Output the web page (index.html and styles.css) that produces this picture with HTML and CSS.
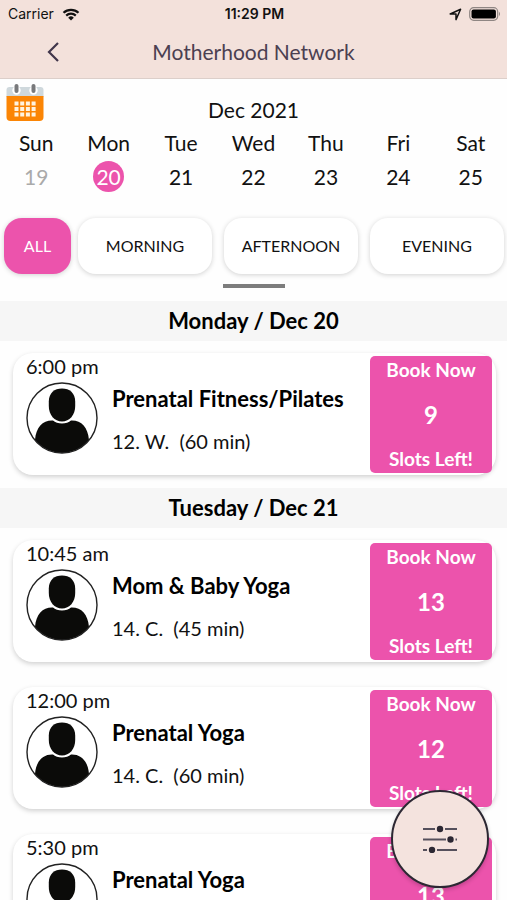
FILE: index.html
```html
<!DOCTYPE html>
<html lang="en">
<head>
<meta charset="utf-8">
<meta name="viewport" content="width=device-width, initial-scale=1">
<title>Motherhood Network</title>
<link rel="stylesheet" href="styles.css">
</head>
<body>
<svg class="defs" aria-hidden="true">
  <symbol id="person" viewBox="0 0 72 72">
    <clipPath id="disc"><circle cx="36" cy="36" r="35"/></clipPath>
    <g clip-path="url(#disc)">
      <path d="M9 58C10 45 17 38 27 38.500C31 42.500 41 42.500 45 38.500C55 38 62 45 63 58V72H9Z" fill="#0b0b09"/>
      <path d="M36 6.500C43.500 6.500 49.200 11 49.200 19.500V24C49.200 33 43.500 39.500 36 39.500S22.800 33 22.800 24V19.500C22.800 11 28.500 6.500 36 6.500Z" fill="#0b0b09"/>
    </g>
    <circle cx="36" cy="36" r="35" fill="none" stroke="#222" stroke-width="1.400"/>
  </symbol>
</svg>
<div class="app">
  <header class="top">
    <div class="status">
      <span class="carrier">Carrier
        <svg class="wifi" viewBox="0 0 18 13" aria-hidden="true"><path d="M1.500 4.800A11 11 0 0 1 16.500 4.800M4.200 7.600A7 7 0 0 1 13.800 7.600" fill="none" stroke="#111" stroke-width="2.200"/><path d="M9 12.500L6.200 9.700A4 4 0 0 1 11.800 9.700Z" fill="#111"/></svg>
      </span>
      <span class="clock">11:29 PM</span>
      <span class="indicators">
        <svg class="arrow" viewBox="0 0 13 13" aria-hidden="true"><path d="M1.200 6L11.600 1.300L7 11.600V6Z" fill="none" stroke="#111" stroke-width="1.500" stroke-linejoin="round"/></svg>
        <svg class="battery" viewBox="0 0 32 14" aria-hidden="true"><rect x="0.700" y="0.700" width="28" height="12.600" rx="4" fill="none" stroke="#8f8683" stroke-width="1.200"/><rect x="2.500" y="2.500" width="24.400" height="9" rx="2" fill="#000"/><path d="M30 4.800Q32 7 30 9.200Z" fill="#8f8683"/></svg>
      </span>
    </div>
    <nav class="navbar">
      <button class="back" aria-label="Back"><svg viewBox="0 0 14 22" aria-hidden="true"><path d="M12 2L3 11L12 20" fill="none" stroke="#41364b" stroke-width="2.200"/></svg></button>
      <h1>Motherhood Network</h1>
    </nav>
  </header>

  <section class="calendar">
    <div class="month">
      <button class="pick" aria-label="Choose date"><svg viewBox="0 0 38 38" aria-hidden="true">
        <path d="M0.500 13V6Q0.500 3 3.500 3H34.500Q37.500 3 37.500 6V13Z" fill="#cfd8dc"/>
        <path d="M0.500 12H37.500V33Q37.500 37 33.500 37H4.500Q0.500 37 0.500 33Z" fill="#fb8505"/>
        <circle cx="10.500" cy="6.500" r="4.200" fill="#fff"/><circle cx="27.500" cy="6.500" r="4.200" fill="#fff"/>
        <rect x="8.500" y="0" width="4" height="9" rx="2" fill="#78797b"/><rect x="25.500" y="0" width="4" height="9" rx="2" fill="#78797b"/>
        <path d="M8.500 17.500h4v4h-4zM14.200 17.500h4v4h-4zM19.900 17.500h4v4h-4zM25.600 17.500h4v4h-4zM8.500 23h4v4h-4zM14.200 23h4v4h-4zM19.900 23h4v4h-4zM25.600 23h4v4h-4zM8.500 28.500h4v4h-4zM14.200 28.500h4v4h-4zM19.900 28.500h4v4h-4zM25.600 28.500h4v4h-4z" fill="#fff3df"/>
      </svg></button>
      <h2>Dec 2021</h2>
    </div>
    <div class="week">
      <span>Sun</span><span>Mon</span><span>Tue</span><span>Wed</span><span>Thu</span><span>Fri</span><span>Sat</span>
      <button class="day past">19</button><button class="day selected">20</button><button class="day">21</button><button class="day">22</button><button class="day">23</button><button class="day">24</button><button class="day">25</button>
    </div>
    <div class="filters">
      <button class="chip active">ALL</button>
      <div class="periods">
        <button class="chip">MORNING</button>
        <button class="chip">AFTERNOON</button>
        <button class="chip">EVENING</button>
      </div>
    </div>
    <div class="handle"></div>
  </section>

  <main class="schedule">
    <h3>Monday / Dec 20</h3>
    <article class="card">
      <div class="who"><time>6:00 pm</time><svg class="avatar" aria-hidden="true"><use href="#person"/></svg></div>
      <div class="info"><h4>Prenatal Fitness/Pilates</h4><p>12. W.&nbsp; (60 min)</p></div>
      <button class="book"><span>Book Now</span><strong>9</strong><span>Slots Left!</span></button>
    </article>
    <h3>Tuesday / Dec 21</h3>
    <article class="card">
      <div class="who"><time>10:45 am</time><svg class="avatar" aria-hidden="true"><use href="#person"/></svg></div>
      <div class="info"><h4>Mom &amp; Baby Yoga</h4><p>14. C.&nbsp; (45 min)</p></div>
      <button class="book"><span>Book Now</span><strong>13</strong><span>Slots Left!</span></button>
    </article>
    <article class="card">
      <div class="who"><time>12:00 pm</time><svg class="avatar" aria-hidden="true"><use href="#person"/></svg></div>
      <div class="info"><h4>Prenatal Yoga</h4><p>14. C.&nbsp; (60 min)</p></div>
      <button class="book"><span>Book Now</span><strong>12</strong><span>Slots Left!</span></button>
    </article>
    <article class="card">
      <div class="who"><time>5:30 pm</time><svg class="avatar" aria-hidden="true"><use href="#person"/></svg></div>
      <div class="info"><h4>Prenatal Yoga</h4></div>
      <button class="book"><span>Book Now</span><strong>13</strong></button>
    </article>
  </main>

  <button class="fab" aria-label="Filters"><svg viewBox="0 0 36 28" aria-hidden="true">
    <path d="M1 4H13M23 4H35M1 14.500H24M33.500 14.500H35M1 25H5M15 25H35" stroke="#55505c" stroke-width="2"/>
    <circle cx="18" cy="4" r="3.200" fill="#2c2833"/><circle cx="28.500" cy="14.500" r="3.200" fill="#2c2833"/><circle cx="10" cy="25" r="3.200" fill="#2c2833"/>
  </svg></button>
</div>
</body>
</html>
```
FILE: styles.css
```css
* { box-sizing: border-box; }
body { margin: 0; background: #fefefe; color: #111; font-family: Lato, "Liberation Sans", sans-serif; font-size: 20px; line-height: 24px; }
h1, h2, h3, h4, p { margin: 0; font-size: inherit; font-weight: 400; }
button { margin: 0; padding: 0; border: 0; background: none; color: inherit; font: inherit; }
svg { display: block; }
.defs { position: absolute; width: 0; height: 0; }
.app { display: flex; flex-direction: column; height: 100vh; }

.top { background: #f3e1db; border-bottom: 1px solid #dccfca; }
.status { display: grid; grid-template-columns: 1fr auto 1fr; align-items: center; height: 28px; padding: 0 6px 0 8px; font-family: Inter, "Liberation Sans", sans-serif; font-size: 14px; }
.carrier { display: flex; align-items: center; gap: 8px; }
.wifi { width: 18px; height: 13px; }
.clock { font-weight: 600; }
.indicators { display: flex; justify-content: flex-end; align-items: center; gap: 7px; }
.arrow { width: 13px; height: 13px; }
.battery { width: 32px; height: 14px; }
.navbar { display: grid; grid-template-columns: 60px 1fr 60px; align-items: center; height: 50px; padding-bottom: 3px; }
.back { justify-self: end; }
.back svg { width: 14px; height: 22px; }
.navbar h1 { color: #4b4051; font-size: 21px; text-align: center; }

.calendar { flex: none; padding-top: 5px; }
.month { display: grid; grid-template-columns: 44px 1fr 44px; height: 45px; padding: 0 6px; }
.month h2 { padding-top: 14px; font-size: 21px; text-align: center; }
.pick { align-self: start; }
.pick svg { width: 38px; height: 38px; }
.week { display: grid; grid-template-columns: repeat(7, 1fr); row-gap: 4px; justify-items: center; align-items: center; font-size: 21px; }
.week span { height: 28px; line-height: 28px; }
.day { width: 31px; height: 31px; border-radius: 50%; line-height: 28px; }
.past { color: #aaa; }
.selected { background: #ec53ac; color: #fff; }
.filters { display: grid; grid-template-columns: 67fr 426fr; gap: 7px; padding: 26px 3px 10px 4px; }
.periods { display: grid; grid-template-columns: repeat(3, 1fr); gap: 12px; }
.chip { height: 56px; border-radius: 18px; background: #fff; box-shadow: 0 1px 5px rgba(0, 0, 0, .18); font-size: 16px; }
.chip.active { background: #ec53ac; color: #fff; }
.handle { width: 62px; height: 4px; margin: 0 auto 13px; background: #7d7d7d; }

.schedule { flex: 1; min-height: 0; overflow-y: auto; scrollbar-width: none; }
.schedule h3 { height: 40px; line-height: 40px; background: #f6f6f6; color: #000; font-size: 22px; font-weight: 700; text-align: center; }
.card { display: grid; grid-template-columns: 99px 1fr 122px; height: 122px; margin: 12px 11px 13px 13px; padding: 3px 4px 2px 0; border-radius: 20px; background: #fff; box-shadow: 0 2px 5px rgba(0, 0, 0, .18); }
.card + .card { margin-top: 25px; }
.who { padding-left: 13px; }
.who time { display: block; height: 26px; line-height: 20px; white-space: nowrap; }
.avatar { width: 72px; height: 72px; }
.info { padding-top: 31px; white-space: nowrap; }
.info h4 { margin-bottom: 18px; color: #000; font-size: 22px; font-weight: 700; }
.book { display: grid; grid-template-rows: 28px 61px 28px; place-items: center; align-content: start; border-radius: 5px; background: #ec53ac; color: #fff; font-size: 19px; font-weight: 700; }
.book strong { font-size: 24px; font-weight: 700; }

.fab { position: fixed; right: 18px; bottom: 12px; display: grid; place-items: center; width: 98px; height: 98px; border: 2px solid #2c2833; border-radius: 50%; background: #f4e3de; box-shadow: 0 2px 4px rgba(0, 0, 0, .2); }
.fab svg { width: 36px; height: 28px; }
```
